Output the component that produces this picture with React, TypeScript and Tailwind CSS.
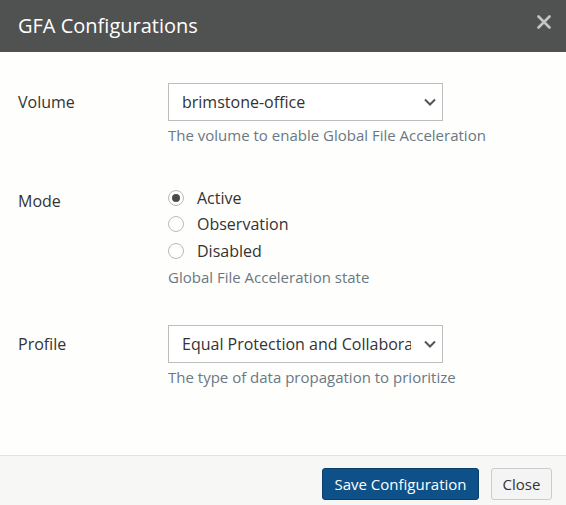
const font = { fontFamily: '"Open Sans", "Noto Sans", sans-serif' };

const ChevronDown = () => (
  <svg width="12" height="8" viewBox="0 0 12 8" fill="none" stroke="#555" strokeWidth="2">
    <path d="M1 1.5l5 5 5-5" />
  </svg>
);

const CloseIcon = () => (
  <svg width="14" height="14" viewBox="0 0 14 14" stroke="#c4c4c4" strokeWidth="2.6" strokeLinecap="round">
    <path d="M1.5 1.5l11 11M12.5 1.5l-11 11" />
  </svg>
);

interface RadioProps {
  label: string;
  checked?: boolean;
}

const Radio = ({ label, checked }: RadioProps) => (
  <label className="flex items-center h-[26.5px]">
    <span className="w-[16px] h-[16px] rounded-full border border-[#b9b9b9] bg-white flex items-center justify-center">
      {checked && <span className="w-[8px] h-[8px] rounded-full bg-[#4a4a4a]" />}
    </span>
    <span className="ml-[13px] text-[16px] text-[#333]">{label}</span>
  </label>
);

const Select = ({ value }: { value: string }) => (
  <div className="w-[275px] h-[38px] border border-[#bdbdbd] bg-white flex items-center pl-[13px] pr-[6px]">
    <span className="flex-1 overflow-hidden whitespace-nowrap text-[16px] text-[#333]">{value}</span>
    <span className="ml-[13px] flex items-center">
      <ChevronDown />
    </span>
  </div>
);

export default function App() {
  return (
    <div className="w-[566px] h-[505px] bg-[#fefefc] flex flex-col" style={font}>
      <div className="h-[52px] bg-[#505251] flex items-center justify-between pl-[18px] pr-[15px]">
        <h1 className="text-[20px] text-white">GFA Configurations</h1>
        <span className="flex -mt-[8px]">
          <CloseIcon />
        </span>
      </div>

      <div className="flex-1 px-[18px]">
        <div className="flex mt-[31px]">
          <div className="w-[150px] text-[16px] text-[#333] pt-[7px]">Volume</div>
          <div>
            <Select value="brimstone-office" />
            <div className="text-[15px] text-[#6b7884] mt-[3px]">The volume to enable Global File Acceleration</div>
          </div>
        </div>

        <div className="flex mt-[38px]">
          <div className="w-[150px] text-[16px] text-[#333] pt-[4px]">Mode</div>
          <div>
            <Radio label="Active" checked />
            <Radio label="Observation" />
            <Radio label="Disabled" />
            <div className="text-[15px] text-[#6b7884] mt-[1.5px]">Global File Acceleration state</div>
          </div>
        </div>

        <div className="flex mt-[37px]">
          <div className="w-[150px] text-[16px] text-[#333] pt-[7px]">Profile</div>
          <div>
            <Select value="Equal Protection and Collaboration" />
            <div className="text-[15px] text-[#6b7884] mt-[3px]">The type of data propagation to prioritize</div>
          </div>
        </div>
      </div>

      <div className="h-[50px] border-t border-[#e2e2e2] bg-[#f7f7f5] flex items-start justify-end pt-[12px] pr-[14px] gap-[12px]">
        <button className="h-[32px] w-[157px] bg-[#0e5189] border border-[#0a3f6c] rounded-[3px] text-white text-[15px]">
          Save Configuration
        </button>
        <button className="h-[32px] w-[61px] bg-[#f4f4f4] border border-[#cccccc] rounded-[3px] text-[#333] text-[15px]">
          Close
        </button>
      </div>
    </div>
  );
}
